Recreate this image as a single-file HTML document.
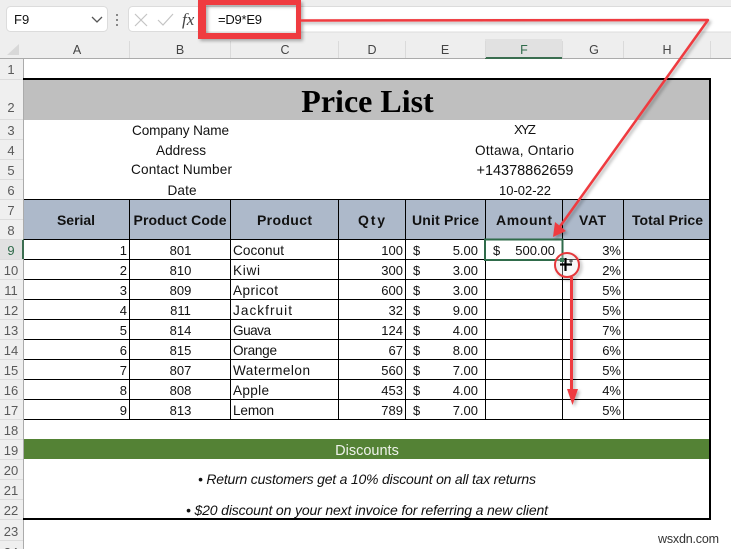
<!DOCTYPE html>
<html><head><meta charset="utf-8">
<style>
html,body{margin:0;padding:0;background:#fff;width:731px;height:549px;overflow:hidden}
svg{display:block;position:absolute;left:0;top:0}
text{font-family:"Liberation Sans",sans-serif;fill:#111}
.t{font-size:13px}
.x{font-size:13.6px}
.h{font-size:14px;font-weight:bold;fill:#111}
.m{text-anchor:middle}
.e{text-anchor:end}
.g{font-size:12.5px;fill:#444;text-anchor:middle}
.r{font-size:13px;fill:#5a5a5a;text-anchor:middle}
.i{font-size:14px;font-style:italic}
</style></head><body>
<svg width="731" height="549" viewBox="0 0 731 549" xmlns="http://www.w3.org/2000/svg">
<defs><filter id="s" x="-10%" y="-10%" width="120%" height="120%"><feDropShadow dx="2" dy="2" stdDeviation="1.5" flood-color="#000" flood-opacity=".3"/></filter></defs>
<!-- ribbon -->
<rect x="0" y="0" width="731" height="59" fill="#eeeeee"/>
<rect x="6.500" y="6.500" width="101" height="25" rx="4" fill="#fff" stroke="#dcdcdc"/>
<text x="14" y="24" class="t">F9</text>
<path d="M92 17l5 5 5-5" fill="none" stroke="#555" stroke-width="1.3"/>
<rect x="116" y="14" width="2" height="2" fill="#888"/><rect x="116" y="19" width="2" height="2" fill="#888"/><rect x="116" y="24" width="2" height="2" fill="#888"/>
<rect x="128.500" y="6.500" width="90" height="25" rx="4" fill="#fff" stroke="#dcdcdc"/>
<path d="M135 14l12 12M147 14l-12 12" stroke="#c4c4c4" stroke-width="1.2" fill="none"/>
<path d="M158 20l5 5 10-11" stroke="#c4c4c4" stroke-width="1.2" fill="none"/>
<text x="182" y="25" style="font-family:'Liberation Serif',serif;font-style:italic;font-size:17px;fill:#444">fx</text>
<rect x="203" y="6.500" width="529" height="25.500" fill="#fff" stroke="#dcdcdc"/>
<text x="218" y="24" class="t" textLength="44">=D9*E9</text>
<!-- column headers -->
<rect x="485" y="39" width="77" height="19" fill="#e1e1e1"/>
<rect x="0" y="58" width="731" height="1" fill="#ababab"/>
<rect x="485" y="57" width="77" height="2" fill="#3b6e50"/>
<path d="M19 44v11H7z" fill="#d8d8d8"/>
<g stroke="#dadada"><path d="M129.500 41v17M230.500 41v17M338.500 41v17M405.500 41v17M485.500 41v17M562.500 41v17M623.500 41v17M710.500 41v17"/></g>
<text x="77" y="54" class="g">A</text><text x="180" y="54" class="g">B</text><text x="285" y="54" class="g">C</text><text x="372" y="54" class="g">D</text><text x="445" y="54" class="g">E</text><text x="524" y="54" class="g" style="fill:#2f6b4a">F</text><text x="594" y="54" class="g">G</text><text x="667" y="54" class="g">H</text>
<!-- row headers -->
<rect x="0" y="59" width="23" height="490" fill="#efefef"/>
<rect x="0" y="239" width="23" height="20" fill="#e1e1e1"/>
<rect x="23" y="59" width="1" height="490" fill="#ababab"/>
<rect x="22" y="239" width="2" height="20" fill="#3b6e50"/>
<path d="M0 79.500h23M0 119.500h23M0 139.500h23M0 159.500h23M0 179.500h23M0 199.500h23M0 219.500h23M0 239.500h23M0 259.500h23M0 279.500h23M0 299.500h23M0 319.500h23M0 339.500h23M0 359.500h23M0 379.500h23M0 399.500h23M0 419.500h23M0 439.500h23M0 459.500h23M0 479.500h23M0 499.500h23M0 519.500h23M0 540.500h23" stroke="#dcdcdc"/>
<text x="11" y="74" class="r">1</text><text x="11" y="112" class="r">2</text><text x="11" y="135" class="r">3</text><text x="11" y="155" class="r">4</text><text x="11" y="175" class="r">5</text><text x="11" y="195" class="r">6</text><text x="11" y="215" class="r">7</text><text x="11" y="235" class="r">8</text><text x="11" y="255" class="r" style="fill:#2f6b4a">9</text><text x="11" y="275" class="r">10</text><text x="11" y="295" class="r">11</text><text x="11" y="315" class="r">12</text><text x="11" y="335" class="r">13</text><text x="11" y="355" class="r">14</text><text x="11" y="375" class="r">15</text><text x="11" y="395" class="r">16</text><text x="11" y="415" class="r">17</text><text x="11" y="435" class="r">18</text><text x="11" y="455" class="r">19</text><text x="11" y="475" class="r">20</text><text x="11" y="495" class="r">21</text><text x="11" y="515" class="r">22</text><text x="11" y="536" class="r">23</text><text x="11" y="557" class="r">24</text>
<!-- bands -->
<rect x="24" y="80" width="686" height="40" fill="#bfbfbf"/>
<rect x="24" y="200" width="686" height="39" fill="#adb9ca"/>
<rect x="24" y="439" width="685" height="20" fill="#548235"/>
<text x="367.500" y="112" class="m" style="font-family:'Liberation Serif',serif;font-weight:bold;font-size:32px;fill:#000">Price List</text>
<text x="367" y="455" class="m" style="font-size:14.500px;fill:#eef2ea">Discounts</text>
<!-- info -->
<text x="132" y="135" class="x" textLength="97">Company Name</text>
<text x="156" y="155" class="x" textLength="50">Address</text>
<text x="131" y="174" class="x" textLength="101">Contact Number</text>
<text x="167.500" y="195" class="x" textLength="29">Date</text>
<text x="514" y="134" class="t" textLength="22">XYZ</text>
<text x="475" y="155" class="x" textLength="99">Ottawa, Ontario</text>
<text x="476.500" y="175" style="font-size:14.500px" textLength="97">+14378862659</text>
<text x="499" y="195" class="t" textLength="52">10-02-22</text>
<!-- grid -->
<path d="M24 199.500H710M24 239.500H710M24 259.500H710M24 279.500H710M24 299.500H710M24 319.500H710M24 339.500H710M24 359.500H710M24 379.500H710M24 399.500H710M24 419.500H710" stroke="#000" fill="none"/>
<path d="M129.500 199v221M230.500 199v221M338.500 199v221M405.500 199v221M485.500 199v221M562.500 199v221M623.500 199v221" stroke="#000" fill="none"/>
<rect x="23" y="78" width="687" height="2" fill="#000"/>
<rect x="23" y="518" width="688" height="2" fill="#000"/>
<rect x="709" y="78" width="2" height="442" fill="#000"/>
<!-- table headers -->
<text x="57" y="225" class="h" textLength="38">Serial</text>
<text x="133.500" y="225" class="h" textLength="93">Product Code</text>
<text x="257" y="225" class="h" textLength="55">Product</text>
<text x="358" y="225" class="h" textLength="27">Qty</text>
<text x="412" y="225" class="h" textLength="67">Unit Price</text>
<text x="496" y="225" class="h" textLength="56">Amount</text>
<text x="579" y="225" class="h" textLength="27">VAT</text>
<text x="632" y="225" class="h" textLength="71">Total Price</text>
<!-- body -->
<text x="127" y="255" class="t e">1</text><text x="127" y="275" class="t e">2</text><text x="127" y="295" class="t e">3</text><text x="127" y="315" class="t e">4</text><text x="127" y="335" class="t e">5</text><text x="127" y="355" class="t e">6</text><text x="127" y="375" class="t e">7</text><text x="127" y="395" class="t e">8</text><text x="127" y="415" class="t e">9</text>
<text x="180.500" y="255" class="t m">801</text><text x="180.500" y="275" class="t m">810</text><text x="180.500" y="295" class="t m">809</text><text x="180.500" y="315" class="t m">811</text><text x="180.500" y="335" class="t m">814</text><text x="180.500" y="355" class="t m">815</text><text x="180.500" y="375" class="t m">807</text><text x="180.500" y="395" class="t m">808</text><text x="180.500" y="415" class="t m">813</text>
<text x="233" y="255" class="x" textLength="51">Coconut</text><text x="233" y="275" class="x" textLength="27">Kiwi</text><text x="233" y="295" class="x" textLength="45">Apricot</text><text x="233" y="315" class="x" textLength="59">Jackfruit</text><text x="233" y="335" class="x" textLength="38">Guava</text><text x="233" y="355" class="x" textLength="44">Orange</text><text x="233" y="375" class="x" textLength="77">Watermelon</text><text x="233" y="395" class="x" textLength="36">Apple</text><text x="233" y="415" class="x" textLength="41">Lemon</text>
<text x="403" y="255" class="t e">100</text><text x="403" y="275" class="t e">300</text><text x="403" y="295" class="t e">600</text><text x="403" y="315" class="t e">32</text><text x="403" y="335" class="t e">124</text><text x="403" y="355" class="t e">67</text><text x="403" y="375" class="t e">560</text><text x="403" y="395" class="t e">453</text><text x="403" y="415" class="t e">789</text>
<text x="413" y="255" class="t">$</text><text x="413" y="275" class="t">$</text><text x="413" y="295" class="t">$</text><text x="413" y="315" class="t">$</text><text x="413" y="335" class="t">$</text><text x="413" y="355" class="t">$</text><text x="413" y="375" class="t">$</text><text x="413" y="395" class="t">$</text><text x="413" y="415" class="t">$</text>
<text x="478" y="255" class="t e">5.00</text><text x="478" y="275" class="t e">3.00</text><text x="478" y="295" class="t e">3.00</text><text x="478" y="315" class="t e">9.00</text><text x="478" y="335" class="t e">4.00</text><text x="478" y="355" class="t e">8.00</text><text x="478" y="375" class="t e">7.00</text><text x="478" y="395" class="t e">4.00</text><text x="478" y="415" class="t e">7.00</text>
<text x="621" y="255" class="t e">3%</text><text x="621" y="275" class="t e">2%</text><text x="621" y="295" class="t e">5%</text><text x="621" y="315" class="t e">5%</text><text x="621" y="335" class="t e">7%</text><text x="621" y="355" class="t e">6%</text><text x="621" y="375" class="t e">5%</text><text x="621" y="395" class="t e">4%</text><text x="621" y="415" class="t e">5%</text>
<text x="493" y="255" class="t">$</text><text x="555" y="255" class="t e">500.00</text>
<!-- discounts -->
<text x="198" y="484" class="i" textLength="338">• Return customers get a 10% discount on all tax returns</text>
<text x="186" y="515" class="i" textLength="362">• $20 discount on your next invoice for referring a new client</text>
<!-- selection -->
<rect x="485" y="239.500" width="77.500" height="20.500" fill="none" stroke="#2f6b4a" stroke-width="2"/>
<!-- annotations -->
<g filter="url(#s)">
<path d="M198 0H301V39H198z M206 5V33H296V5z" fill="#ef3b3f" fill-rule="evenodd"/>
<path d="M300 20.500L708 20L556 232" fill="none" stroke="#ef3b3f" stroke-width="2.500" stroke-linejoin="round"/>
<path d="M553 237L555 222 566 231z" fill="#ef3b3f"/>
<path d="M571.500 277V392" fill="none" stroke="#ef3b3f" stroke-width="3"/>
<path d="M567 389h11l-5.500 16z" fill="#ef3b3f"/>
<circle cx="567" cy="265" r="12" fill="#fff" fill-opacity=".25" stroke="#e5383b" stroke-width="2"/>
</g>
<rect x="560" y="258" width="4" height="4" fill="#3b7d5a"/>
<path d="M565.500 258v13M560 264.500h12" stroke="#000" stroke-width="2.200"/>
<path d="M571 259v4M569 261h4" stroke="#333" stroke-width="1"/>
<text x="719" y="543" class="e" style="font-size:12.500px;fill:#333" textLength="61">wsxdn.com</text>
</svg>
</body></html>
